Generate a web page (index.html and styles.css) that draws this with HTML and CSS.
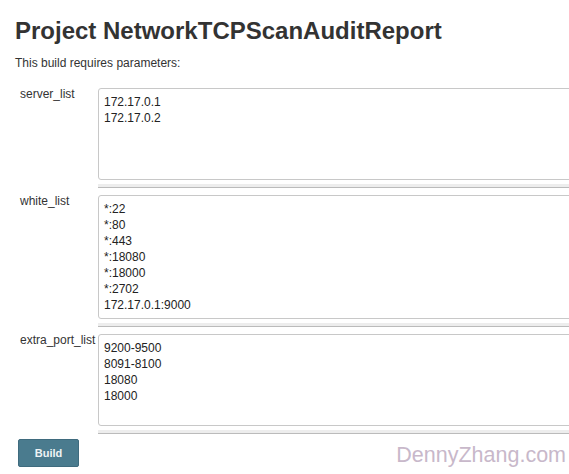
FILE: index.html
```html
<!DOCTYPE html>
<html>
<head>
<meta charset="utf-8">
<link rel="stylesheet" href="styles.css">
</head>
<body>
<div class="page">
  <h1 class="title">Project NetworkTCPScanAuditReport</h1>
  <p class="intro">This build requires parameters:</p>
  <div class="params">
    <div class="param">
      <div class="param-name">server_list</div>
      <div class="param-value">
        <textarea class="param-input" rows="5">172.17.0.1
172.17.0.2</textarea>
        <div class="handle"></div>
      </div>
    </div>
    <div class="param">
      <div class="param-name">white_list</div>
      <div class="param-value">
        <textarea class="param-input" rows="7">*:22
*:80
*:443
*:18080
*:18000
*:2702
172.17.0.1:9000</textarea>
        <div class="handle"></div>
      </div>
    </div>
    <div class="param">
      <div class="param-name">extra_port_list</div>
      <div class="param-value">
        <textarea class="param-input" rows="5">9200-9500
8091-8100
18080
18000</textarea>
        <div class="handle"></div>
      </div>
    </div>
  </div>
  <button class="build">Build</button>
</div>
<div class="watermark">DennyZhang.com</div>
</body>
</html>
```

FILE: styles.css
```css
html, body {
  margin: 0;
  padding: 0;
  overflow: hidden;
  background: #fff;
}
body {
  font-family: "Liberation Sans", Arial, sans-serif;
  color: #333;
  width: 569px;
  height: 474px;
  position: relative;
}
.page {
  padding: 17px 0 0 15px;
}
.title {
  margin: 0;
  font-size: 24px;
  line-height: 28px;
  font-weight: bold;
  color: #333;
}
.intro {
  margin: 10px 0 0 0;
  font-size: 12px;
  line-height: 16px;
  color: #333;
}
.params {
  margin-top: 17px;
  display: flex;
  flex-direction: column;
  gap: 7px;
}
.param {
  display: flex;
  align-items: flex-start;
}
.param-name {
  width: 78px;
  padding-left: 5px;
  font-size: 12px;
  line-height: 12px;
  color: #333;
  flex: none;
}
.param-value {
  display: flex;
  flex-direction: column;
  gap: 4px;
  flex: none;
}
.param-input {
  display: block;
  width: 520px;
  margin: 0;
  padding: 5px;
  border: 1px solid #c8c8c8;
  border-radius: 3px;
  font-family: "Liberation Sans", Arial, sans-serif;
  font-size: 12px;
  line-height: 16px;
  color: #222;
  resize: none;
  overflow: hidden;
  outline: none;
  background: #fff;
}
.handle {
  width: 532px;
  height: 3px;
  background: #ededed;
  border-bottom: 1px solid #bbb;
}
.build {
  display: block;
  margin: 5px 0 0 3px;
  width: 61px;
  height: 28px;
  padding: 0;
  border: 1px solid #3f6b7e;
  border-radius: 2px;
  background: #4a7b8e;
  color: #eef3f5;
  font-family: "Liberation Sans", Arial, sans-serif;
  font-size: 11px;
  font-weight: bold;
}
.watermark {
  position: absolute;
  right: 3px;
  bottom: 7px;
  font-family: "Liberation Sans", Arial, sans-serif;
  font-size: 21.5px;
  line-height: 24px;
  color: #c8b8ca;
}
```
